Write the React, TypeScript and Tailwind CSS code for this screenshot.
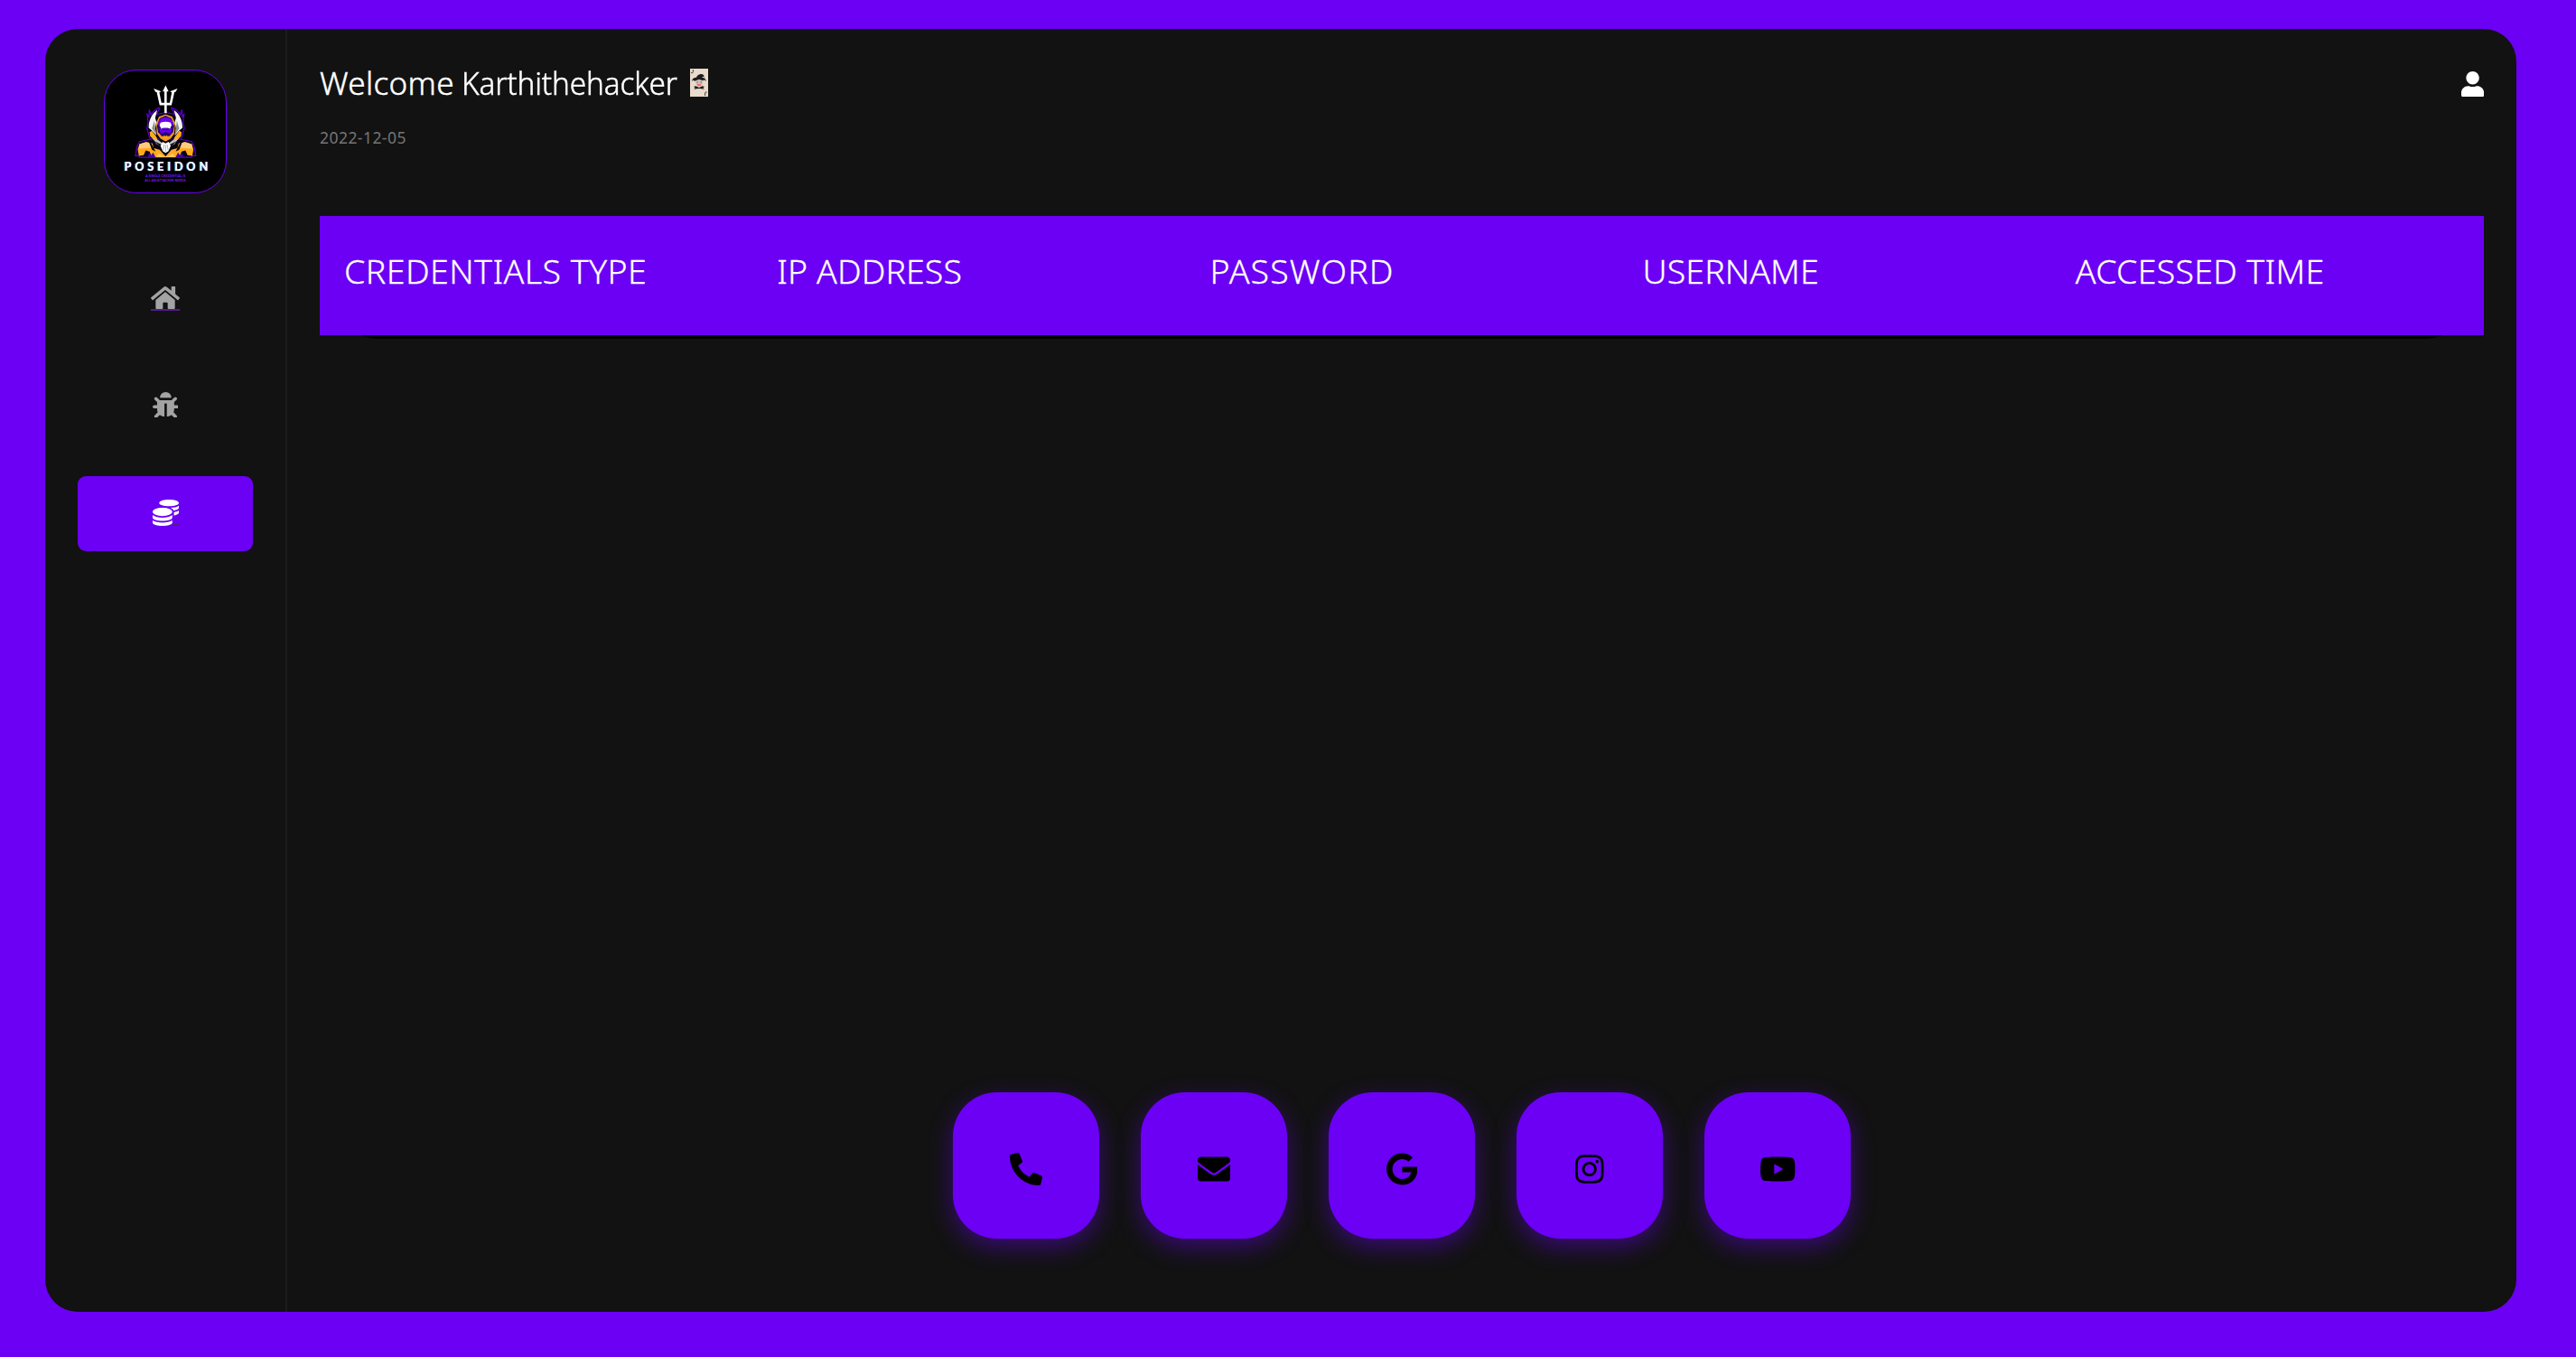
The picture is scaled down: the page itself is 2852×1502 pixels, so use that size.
import React from "react";
import {
  FaBug,
  FaCoins,
  FaEnvelope,
  FaGoogle,
  FaHome,
  FaInstagram,
  FaPhoneAlt,
  FaUser,
  FaYoutube,
} from "react-icons/fa";

function PoseidonLogo() {
  return (
    <svg viewBox="45 51 408 410" className="block h-full w-full">
      {/* aura behind the wings */}
      <path
        d="M230 176c-12 3-22 12-29 24l-6-18-1 24-6-8 3 28-4 20 9 30 22 34 32 10 32-10 22-34 9-30-4-20 3-28-6 8-1-24-6 18c-7-12-17-21-29-24l10 22-28-6-32 6z"
        fill="#06010f"
        stroke="#5c00d8"
        strokeWidth="3.5"
      />
      {/* shoulders outline */}
      <path
        d="M200 282l-38 8-9 18-5 30h12l3 5h174l3-5h12l-5-30-9-18-38-8z"
        fill="#0b0216"
        stroke="#5a00d2"
        strokeWidth="3.5"
      />
      {/* armour */}
      <path d="M162 299l22-7 22 4 4 16 20 6 20 22 20-22 20-6 4-16 22-4 22 7 6 17-4 22-16-2-7-16-13 4-8 19h-92l-8-19-13-4-7 16-16 2-4-22z" fill="#ffab1c" />
      <path d="M162 299l22-7 20 4 3 15-48 3zM338 299l-22-7-20 4-3 15 48 3z" fill="#ffcb80" />
      <path d="M226 330l24 12 24-12 8 13h-64z" fill="#ffc66a" />
      <path d="M190 343l4-14 8 7 6-9 8 16zM310 343l-4-14-8 7-6-9-8 16z" fill="#4306a8" />
      <path d="M198 288l18 36-12-6-10-26zM302 288l-18 36 12-6 10-26z" fill="#0a0a0a" />
      {/* hood */}
      <path d="M250 196l24 9 10 22-3 38-13 17-18 10-18-10-13-17-3-38 10-22z" fill="#f09a1c" stroke="#0a0210" strokeWidth="4" />
      <path d="M196 258l8-4 16 22 4 12-14-4-12-12zM304 258l-8-4-16 22-4 12 14-4 12-12z" fill="#ffab1c" />
      {/* wings */}
      <path d="M222 184c-18 12-29 34-29 60l12 10 14 16-4-24 4-22-4-14z" fill="#f4f4f4" />
      <path d="M278 184c18 12 29 34 29 60l-12 10-14 16 4-24-4-22 4-14z" fill="#f4f4f4" />
      <path d="M212 220l-8 26 14 20-3-22zM288 220l8 26-14 20 3-22z" fill="#8d8d8d" />
      {/* face */}
      <path d="M250 203l20 9 9 26-4 20-12 14h-26l-12-14-4-20 9-26z" fill="#2a0369" />
      <ellipse cx="250" cy="228" rx="25" ry="20" fill="#6a06ef" />
      <path d="M228 244l22 8 22-8-5 19-17-5-17 5z" fill="#6500ee" />
      <path d="M233 226q17-6 34 0l3 9-5 12-8-3h-14l-8 3-5-12z" fill="#fff" />
      <path d="M246 268l4 6 4-6 4 8-8 8-8-8z" fill="#f7a41b" />
      {/* beard */}
      <path d="M206 278l20 8 16 12-5 10-18-10zM294 278l-20 8-16 12 5 10 18-10z" fill="#c4c4c4" />
      <path d="M212 288l24 12-4 8zM288 288l-24 12 4 8z" fill="#161616" />
      <path d="M240 291l10 5 10-5 7 14-7 17-10 6-10-6-7-17z" fill="#fff" />
      <path d="M245 300l-4 20M250 302v22M255 300l4 20" stroke="#666" strokeWidth="1.5" />
      {/* trident */}
      <path
        d="M250 101l10 20h-6v38h10l7-35-6-3 25-10-6 12h-4l-10 45h-16v26h-8v-26h-16l-10-45h-4l-6-12 25 10-6 3 7 35h10v-38h-6z"
        fill="#fff"
      />
      {/* word mark */}
      <text
        x="111"
        y="389"
        textLength="282"
        lengthAdjust="spacing"
        fill="#fff"
        className="font-['Lato',sans-serif] text-[38px] font-bold [filter:drop-shadow(-1.5px_0_0_#28e0e8)_drop-shadow(1.5px_0_0_#c83be0)]"
      >
        POSEIDON
      </text>
      <g fontFamily="Lato, sans-serif" fontWeight="900" fontSize="11" fill="#7416ea">
        <text x="182" y="411" textLength="135">A SINGLE CREDENTIAL IS</text>
        <text x="180" y="425" textLength="140">ALL AN ATTACKER NEEDS.</text>
      </g>
    </svg>
  );
}

function JokerCard() {
  return (
    <svg viewBox="0 0 60 93" className="h-[31px] w-[20px]">
      <rect width="60" height="93" fill="#e9dacb" />
      <path d="M10 3v8q0 3-3 3H3" fill="none" stroke="#222" strokeWidth="2.5" />
      <path d="M50 90v-9q0-3 3-3h3" fill="none" stroke="#222" strokeWidth="2.5" />
      <path d="M6 41c1-8 7-12 15-12 3-8 10-12 18-11 6 1 8 6 8 10l-5-2-2 4c8-1 12 3 13 12l-6-5-6 4-11-4-14 4-5-3z" fill="#1c1c1f" />
      <path d="M18 40l13-4 12 4-1 10-5 8H25l-6-8z" fill="#cfc3bb" />
      <path d="M22 45h5M34 45h5" stroke="#555" strokeWidth="2.5" />
      <path d="M23 50l7 2 7-2-2 8h-10z" fill="#f4686b" />
      <path d="M12 60l7-2 11 5 11-5 7 2-5 4 4 5-8-2-9-1-9 1-8 2 4-5z" fill="#1c1c1f" />
    </svg>
  );
}

const columns = [
  { label: "CREDENTIALS TYPE", tracking: "tracking-[0.45px]" },
  { label: "IP ADDRESS", tracking: "tracking-[0.1px]" },
  { label: "PASSWORD", tracking: "tracking-[1.1px]" },
  { label: "USERNAME", tracking: "tracking-[0.1px]" },
  { label: "ACCESSED TIME", tracking: "tracking-[0.3px]" },
];

const contacts = [
  { name: "phone", icon: <FaPhoneAlt size={36} /> },
  { name: "mail", icon: <FaEnvelope size={36} /> },
  { name: "google", icon: <FaGoogle className="h-[36px] w-[34.3px]" /> },
  { name: "instagram", icon: <FaInstagram className="h-[36px] w-[31.5px]" /> },
  { name: "youtube", icon: <FaYoutube className="h-[36px] w-[40.5px]" /> },
];

export default function App() {
  return (
    <div className="h-[1502px] w-[2852px] overflow-hidden bg-[#6b00f5] pt-[32px] pl-[50px] font-['Noto_Sans',sans-serif]">
      <div className="flex h-[1420px] w-[2736px] overflow-hidden rounded-[36px] bg-[#121212]">
        <aside className="flex w-[268px] flex-col items-center border-r-2 border-[#1c1c1c] pt-[45px]">
          <div className="h-[137px] w-[136px] overflow-hidden rounded-[36px] border border-[#6b00f5] bg-black">
            <PoseidonLogo />
          </div>
          <nav className="mt-[75px] flex flex-col gap-9 text-[#a3a3a3]">
            <a className="flex h-[83px] w-[194px] items-center justify-center pb-[2px]">
              <span className="relative">
                <FaHome className="block h-[29px] w-[32px]" />
                <span className="absolute bottom-0 left-0 h-[2px] w-[32px] bg-[#551a8b]" />
              </span>
            </a>
            <a className="flex h-[83px] w-[194px] items-center justify-center pb-[3px]">
              <FaBug className="block size-[28.8px]" />
            </a>
            <a className="flex h-[83px] w-[194px] items-center justify-center rounded-[9px] bg-[#6b00f5] pb-[2px] text-white">
              <span className="relative">
                <FaCoins className="block size-[29px]" />
                <span className="absolute right-0 bottom-0 h-[2px] w-[7px] bg-[#551a8b]" />
              </span>
            </a>
          </nav>
        </aside>

        <main className="flex flex-1 flex-col px-9 pt-[34px] pb-[81px]">
          <header className="flex h-[50px] items-center justify-between text-white">
            <h1 className="flex items-center text-[35px] leading-[50px] font-light whitespace-nowrap [-webkit-text-stroke:0.5px_white]">
              <span className="w-[157px] translate-y-px tracking-[0.4px]">Welcome</span>
              <span className="w-[253px] translate-y-px">
                <span className="inline-block origin-left scale-x-[0.95] tracking-[-0.1px]">Karthithehacker</span>
              </span>
              <JokerCard />
            </h1>
            <FaUser className="h-[28.8px] w-[25.2px] translate-y-[2px]" />
          </header>
          <p className="mt-[23px] text-[17.5px] leading-[26px] tracking-[0.45px] text-[#757575]">2022-12-05</p>

          <div className="mt-[74px] h-[136px] bg-[#0f0f0f]">
            <div className="h-full rounded-[68px] bg-black">
              <div className="grid h-[132px] grid-cols-5 items-center bg-[#6b00f5] pb-[9px] text-[37.5px] font-light text-white [-webkit-text-stroke:0.3px_white]">
                {columns.map((c) => (
                  <div key={c.label} className={`pl-[27px] whitespace-nowrap ${c.tracking}`}>
                    {c.label}
                  </div>
                ))}
              </div>
            </div>
          </div>

          <div className="mt-auto flex justify-center gap-[46px]">
            {contacts.map((c) => (
              <a
                key={c.name}
                aria-label={c.name}
                className="flex size-[162px] items-center justify-center rounded-[48.6px] bg-[#6b00f5] pt-[7px] text-black shadow-[0_9px_27px_rgba(107,0,245,0.45)]"
              >
                {c.icon}
              </a>
            ))}
          </div>
        </main>
      </div>
    </div>
  );
}
